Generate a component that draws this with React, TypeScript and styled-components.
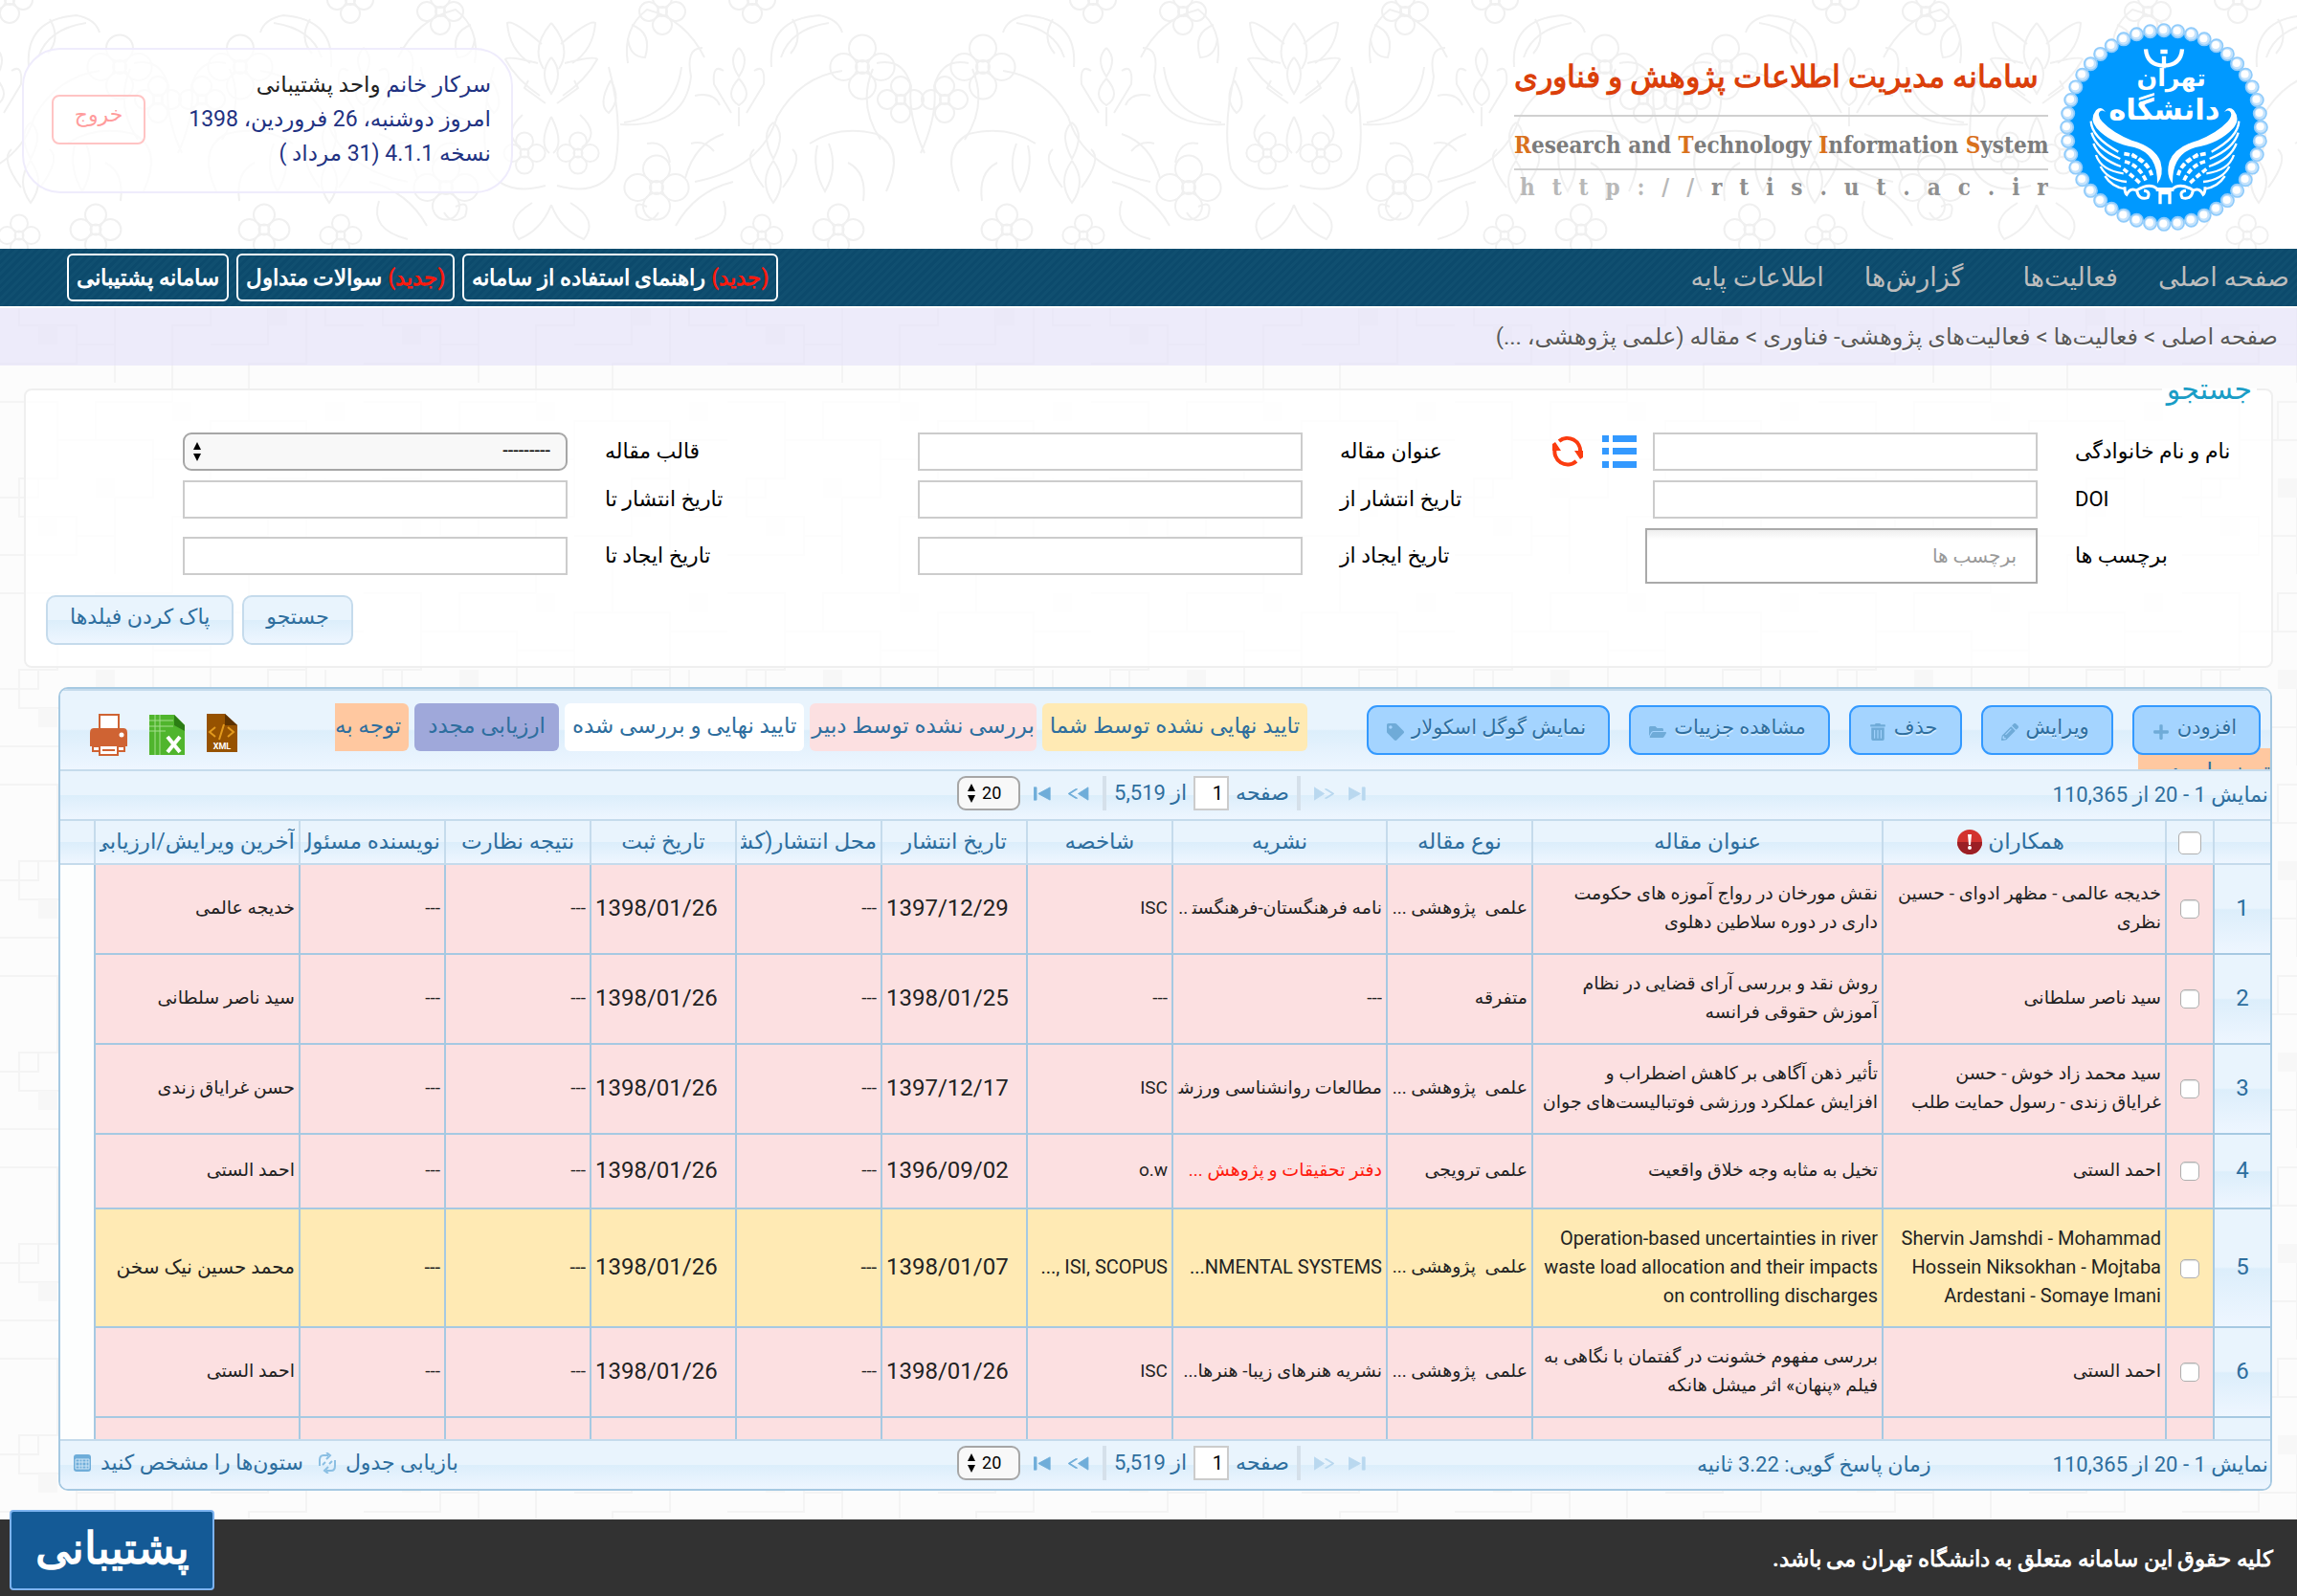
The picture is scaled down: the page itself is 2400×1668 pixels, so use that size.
import React from "react";
import styled, { createGlobalStyle } from "styled-components";
import { FaPlus, FaPencilAlt, FaTrashAlt, FaFolderOpen, FaTag } from "react-icons/fa";

const svgUrl = (markup: string) => `url("data:image/svg+xml,${encodeURIComponent(markup)}")`;

const flower = (x: number, y: number, r: number) =>
  `<g transform="translate(${x} ${y})"><circle r="${r * 0.5}"/><circle cy="${-r * 1.4}" r="${r}"/><circle cy="${r * 1.4}" r="${r}"/><circle cx="${-r * 1.4}" r="${r}"/><circle cx="${r * 1.4}" r="${r}"/></g>`;

const halfMotif = `
  <path d="M0 60Q14 76 0 98Q-14 76 0 60M0 24Q22 50 8 72M10 46Q40 20 46 24Q44 52 22 66M14 66Q46 58 48 62Q36 84 12 100M24 84L28 92L6 108"/>
  <path d="M0 122Q14 150 2 160M30 120Q52 140 32 154M60 70Q76 130 66 176Q50 206 6 194"/>
  <path d="M62 84Q48 110 60 118Q74 104 62 84M72 130Q140 134 146 80Q140 50 158 50M76 128Q130 120 136 70"/>
  <path d="M80 66Q74 30 100 10Q140 20 160 60M84 26Q106 34 98 60Q82 60 80 40"/>
  <path d="M196 50Q184 62 196 80Q208 62 196 50M196 82Q180 100 196 110Q212 100 196 82M180 74Q168 66 170 88L188 118M212 74Q224 66 222 88L204 118M196 112V132"/>
  <path d="M180 140Q150 150 140 186M146 150Q160 146 170 158M100 150Q120 146 124 170M252 20Q264 40 250 56M310 170Q330 180 326 210M150 100Q170 96 176 110"/>
  <path d="M230 70Q226 20 280 16Q300 20 304 34M240 60Q250 30 290 24M304 74Q260 80 236 122Q220 176 150 190"/>
  <path d="M232 128Q218 140 232 166Q246 140 232 128M232 168Q216 190 232 212Q248 190 232 168M212 156Q200 166 222 196M252 156Q264 166 242 196"/>
  <path d="M180 210Q190 240 150 250M190 190Q150 200 130 236M270 150Q300 130 340 140Q370 156 350 200M278 152Q272 176 286 200Q300 176 290 150"/>
  <path d="M20 212Q50 230 34 250Q10 240 0 214M100 216Q84 208 90 226Q104 236 112 222M340 66Q368 60 376 90Q372 120 390 160M336 72Q320 110 344 146"/>
  ${flower(28, 160, 9)}${flower(110, 196, 14)}${flower(325, 70, 14)}${flower(300, 240, 11)}${flower(116, 12, 10)}${flower(365, 104, 10)}${flower(210, 0, 10)}${flower(220, 246, 9)}`;

const floral = svgUrl(
  `<svg xmlns="http://www.w3.org/2000/svg" width="776" height="260" viewBox="0 0 776 260"><g fill="none" stroke="#f0f0f0" stroke-width="2"><g>${halfMotif}</g><g transform="translate(776 0) scale(-1 1)">${halfMotif}</g></g></svg>`
);

const bricks = svgUrl(
  `<svg xmlns="http://www.w3.org/2000/svg" width="380" height="200" viewBox="0 0 380 200"><g fill="none" stroke="#f4f4f4" stroke-width="2"><path d="M0 20H60V60H100V20H180V0M60 60V100H20V140H80V180H0M100 60H160V120H120V160H80M160 80H220V40H260V0M220 80V140H180V200M260 40H320V100H280V160H220M320 60H380M320 100V180H260V200M340 100V140H380M120 160V200M40 100V120H0"/></g><g fill="#f7f7f7"><rect x="180" y="20" width="20" height="20"/><rect x="40" y="140" width="20" height="20"/><rect x="280" y="120" width="20" height="20"/><rect x="340" y="20" width="20" height="20"/><rect x="100" y="100" width="20" height="20"/></g></svg>`
);

const arrows = svgUrl(
  `<svg xmlns="http://www.w3.org/2000/svg" width="10" height="20" viewBox="0 0 10 20"><path d="M5 0L9 8H1ZM5 20L9 12H1Z" fill="#000"/></svg>`
);

const sheen = "linear-gradient(#e9f4fd 0, #e9f4fd 49%, #dceefb 51%, #eef6ff 100%)";
const textFont = 'Roboto, "DejaVu Sans", sans-serif';
const boldFont = 'Roboto, "Open Sans", serif';
const slabFont = '"DejaVu Serif Condensed", "DejaVu Serif", serif';

const Global = createGlobalStyle`
  * { box-sizing: border-box; }
  body { margin: 0; direction: rtl; font: 20px/30px ${textFont}; color: #222; background: #fcfcfc ${bricks}; }
  button, input, select { font: inherit; color: inherit; margin: 0; }
  a { color: inherit; text-decoration: none; }
`;

/* ---------- header ---------- */
const Header = styled.header`
  height: 260px;
  padding: 24px 30px 0 23px;
  display: flex;
  align-items: flex-start;
  background: #fff ${floral} -200px 0;
`;
const Brand = styled.div`
  width: 558px;
  margin: 16px 12px 0 auto;
  display: flex;
  flex-direction: column;
`;
const BrandTitle = styled.h1`
  margin: 0;
  padding-right: 10px;
  height: 80px;
  font: 700 32px/80px ${boldFont};
  color: #db3f0a;
  white-space: nowrap;
`;
const Rule = styled.div`
  height: 2px;
  background: #d0d0d0;
`;
const BrandLatin = styled.div`
  direction: ltr;
  height: 54px;
  font: 700 24px/60px ${slabFont};
  color: #7c7c7c;
  white-space: nowrap;
  b { color: #d9711c; }
`;
const BrandUrl = styled.div`
  direction: ltr;
  display: flex;
  justify-content: space-between;
  padding-left: 6px;
  font: 700 24px/36px ${slabFont};
  color: #8f8f8f;
  span:nth-child(-n + 7) { color: #b8b8b8; }
`;
const UserCard = styled.section`
  width: 513px;
  height: 152px;
  margin-top: 26px;
  padding: 0 21px 2px 29px;
  display: flex;
  align-items: center;
  justify-content: space-between;
  border: 2px solid #efecfc;
  border-radius: 40px;
  background: rgba(255, 255, 255, 0.7);
`;
const UserLines = styled.div`
  font-size: 23px;
  line-height: 36px;
  color: #1f3282;
  b { font-weight: 400; color: #222; }
`;
const Logout = styled.button`
  width: 98px;
  height: 52px;
  padding: 0 0 10px;
  font-size: 22px;
  color: #ff9c9c;
  background: transparent;
  border: 2px solid #ffc4c4;
  border-radius: 8px;
`;

/* ---------- navigation ---------- */
const Nav = styled.nav`
  height: 60px;
  padding: 0 8px 0 70px;
  display: flex;
  align-items: center;
  background: repeating-linear-gradient(-45deg, #0c4a6c 0 3px, #11517a00 3px 6px), #104f70;
`;
const NavLink = styled.a<{ $gap: number }>`
  font-size: 27px;
  color: #bdbdbd;
  margin-left: ${(p) => p.$gap}px;
`;
const NavButtons = styled.div`
  margin-right: auto;
  display: flex;
  gap: 8px;
`;
const NavButton = styled.a`
  height: 50px;
  padding: 0 8px;
  font: 700 23px/48px ${boldFont};
  color: #fff;
  border: 2px solid #fff;
  border-radius: 6px;
  white-space: nowrap;
  em { font-style: normal; color: #ff1a0d; }
`;
const Crumbs = styled.div`
  height: 62px;
  padding: 0 20px;
  border-top: 2px solid #fff;
  font-size: 24px;
  line-height: 60px;
  color: #5a5a5a;
  text-shadow: 0 2px 1px #fff;
  background: rgba(226, 224, 248, 0.6);
`;

/* ---------- search form ---------- */
const Search = styled.fieldset`
  margin: 9px 25px 0;
  padding: 0;
  border: 2px solid #efefef;
  border-radius: 8px;
  background: rgba(255, 255, 255, 0.8);
`;
const Legend = styled.legend`
  margin-right: 15px;
  padding: 0 5px;
  font-size: 30px;
  line-height: 32px;
  color: #1a9dc6;
`;
const Fields = styled.div`
  display: grid;
  grid-template-columns: repeat(3, 1fr);
  row-gap: 10px;
  padding: 29px 38px 12px 4px;
`;
const Field = styled.div`
  display: grid;
  grid-template-columns: 206px minmax(0, 1fr) 160px;
  align-items: center;
  color: #000;
`;
const FieldLabel = styled.label`
  padding-left: 39px;
  font-size: 22px;
  direction: ltr;
`;
const TextBox = styled.input`
  width: 100%;
  height: 40px;
  padding: 0 8px;
  border: 2px solid #ccc;
  background: #fff;
`;
const TagBox = styled.input`
  width: calc(100% + 8px);
  height: 58px;
  padding: 0 20px;
  margin-left: -7px;
  font-size: 20px;
  border: 2px solid #aaa;
  background: linear-gradient(#eee, #fff 10px);
  &::placeholder { color: #999; opacity: 1; }
`;
const Select = styled.select`
  appearance: none;
  width: 100%;
  height: 40px;
  padding: 0 16px 4px 30px;
  font-size: 20px;
  color: #000;
  border: 2px solid #a6a6a6;
  border-radius: 9px;
  background: #f8f8f8 ${arrows} 8px center no-repeat;
`;
const Tools = styled.div`
  display: flex;
  gap: 20px;
  padding-right: 17px;
`;
const IconButton = styled.button`
  padding: 0;
  border: 0;
  background: none;
  display: flex;
`;
const Actions = styled.div`
  display: flex;
  justify-content: flex-end;
  gap: 9px;
  padding: 0 0 22px 21px;
`;
const SoftButton = styled.button`
  height: 52px;
  padding: 0 23px 6px;
  font-size: 22px;
  color: #2e6e9e;
  border: 2px solid #c5dbec;
  border-radius: 10px;
  background: ${sheen};
`;

/* ---------- grid ---------- */
const Panel = styled.section`
  margin: 20px 26px 30px 61px;
  border: 2px solid #a6c9e2;
  border-radius: 10px;
  overflow: hidden;
  color: #2e6e9e;
`;
const Toolbar = styled.div`
  position: relative;
  height: 84px;
  overflow: hidden;
  padding: 0 10px 0 31px;
  display: flex;
  align-items: center;
  border-top: 2px solid #c5dbec;
  background: ${sheen};
`;
const ToolButtons = styled.div`
  position: relative;
  z-index: 1;
  display: flex;
  gap: 20px;
`;
const ToolButton = styled.button`
  height: 52px;
  padding: 0 23px 6px 19px;
  display: flex;
  align-items: center;
  gap: 8px;
  font-size: 21px;
  line-height: 40px;
  text-shadow: 0 2px 0 #cfe8fc;
  border: 2px solid #3399ff;
  border-radius: 11px;
  background: #a4d4ff;
  white-space: nowrap;
  svg { width: 18px; height: 18px; color: #6fabd8; margin-top: 10px; }
`;
const Chips = styled.div`
  margin: 0 62px 6px auto;
  display: flex;
  gap: 6px;
`;
const Chip = styled.span<{ $bg: string; $pad?: number }>`
  height: 50px;
  padding: 0 ${(p) => p.$pad ?? 8}px;
  font-size: 23px;
  line-height: 48px;
  border-radius: 6px;
  background: ${(p) => p.$bg};
  white-space: nowrap;
`;
const ChipStart = styled(Chip)`
  padding-left: 0;
  border-radius: 0 6px 6px 0;
`;
const ChipRest = styled(Chip)`
  position: absolute;
  right: 0;
  bottom: -28px;
  padding-right: 0;
  border-radius: 6px 0 0 6px;
`;
const Exports = styled.div`
  display: flex;
  gap: 22px;
  margin-top: 10px;
`;
const Pager = styled.div`
  height: 52px;
  padding: 0 2px 0 14px;
  display: grid;
  grid-template-columns: 1fr auto 1fr;
  align-items: center;
  font-size: 22px;
  border-top: 2px solid #c5dbec;
  background: ${sheen};
`;
const PagerInfo = styled.div`
  display: flex;
  gap: 127px;
  white-space: nowrap;
`;
const PagerLinks = styled.div`
  display: flex;
  justify-content: flex-end;
  gap: 16px;
  padding-bottom: 4px;
`;
const PagerLink = styled.button`
  padding: 0;
  border: 0;
  background: none;
  display: flex;
  align-items: center;
  gap: 10px;
  font-size: 22px;
  color: #2e6e9e;
`;
const PagerNav = styled.div`
  direction: ltr;
  display: flex;
  align-items: center;
  gap: 14px;
  margin-right: 16px;
  padding-bottom: 4px;
`;
const Divider = styled.i`
  width: 4px;
  height: 36px;
  background: #d5e0ea;
`;
const PageInput = styled.input`
  width: 37px;
  height: 36px;
  padding: 0 4px;
  font-size: 20px;
  text-align: right;
  color: #000;
  border: 2px solid #ccc;
  background: #fff;
`;
const PageText = styled.label`
  display: flex;
  align-items: center;
  gap: 7px;
  margin: 0 -6px;
  direction: rtl;
`;
const PageSize = styled(Select)`
  width: 66px;
  height: 36px;
  padding: 0 16px 0 24px;
  font-size: 18px;
`;
const Viewport = styled.div`
  height: 648px;
  overflow: hidden;
  border-top: 2px solid #c5dbec;
`;
const Table = styled.table`
  width: 100%;
  table-layout: fixed;
  border-collapse: separate;
  border-spacing: 0;
`;
const Col = styled.col<{ $w?: number }>`
  width: ${(p) => (p.$w ? p.$w + "px" : "auto")};
`;
const HeadCell = styled.th`
  height: 46px;
  padding: 0 4px;
  font-size: 23px;
  font-weight: 400;
  line-height: 42px;
  white-space: nowrap;
  border-left: 2px solid #c5dbec;
  border-bottom: 2px solid #c5dbec;
  background: ${sheen};
  &:last-child { border-left: 0; }
`;
const Clip = styled.div`
  overflow: hidden;
  white-space: pre;
`;
const WithIcon = styled.span`
  display: inline-flex;
  align-items: center;
  gap: 6px;
  padding-right: 28px;
`;
const Row = styled.tr<{ $bg: string; $h: number; $size: number }>`
  height: ${(p) => p.$h}px;
  font-size: ${(p) => p.$size}px;
  background: ${(p) => p.$bg};
`;
const Cell = styled.td<{ $kind?: "num" | "check" | "date" | "rest" | "type"; $red?: boolean }>`
  padding: 0 ${(p) => (p.$kind === "check" ? 0 : 4)}px 2px;
  vertical-align: middle;
  white-space: pre-line;
  color: ${(p) => (p.$red ? "#ff1a0d" : p.$kind === "num" ? "#2e6e9e" : "#222")};
  border-left: 2px solid #a6c9e2;
  border-bottom: 2px solid #a6c9e2;
  ${(p) => p.$kind === "num" && `text-align: center; font-size: 24px; background: ${sheen};`}
  ${(p) => p.$kind === "check" && "text-align: center;"}
  ${(p) => p.$kind === "date" && "padding-left: 6px; text-align: left; direction: ltr; font-size: 24px;"}
  ${(p) => p.$kind === "type" && "font-size: 19px;"}
  ${(p) => p.$kind === "rest" && "border: 0; background: #fdfefe;"}
`;
const Check = styled.input<{ $size: number }>`
  appearance: none;
  display: inline-block;
  vertical-align: middle;
  width: ${(p) => p.$size}px;
  height: ${(p) => p.$size}px;
  border: 1px solid #b0b0b0;
  border-radius: 5px;
  background: #fff;
  box-shadow: inset 0 1px 1px #ddd;
`;

/* ---------- footer ---------- */
const Footer = styled.footer`
  height: 80px;
  padding: 0 25px;
  font: 700 23px/84px ${boldFont};
  color: #fff;
  background: #323232;
`;
const Support = styled.a`
  position: fixed;
  left: 10px;
  bottom: 6px;
  width: 214px;
  height: 84px;
  font: 700 46px/76px ${boldFont};
  text-align: center;
  color: #fff;
  border: 2px solid #7db3f0;
  border-radius: 4px;
  background: #145a96;
`;

const beads = Array.from({ length: 44 }, (_, i) => {
  const a = (i / 44) * Math.PI * 2;
  return { x: 363 + 304 * Math.sin(a), y: 369 - 304 * Math.cos(a) };
});

const Wing = () => (
  <g>
    <path fill="#fff" d="M180 322Q166 300 150 316Q128 344 152 372Q196 420 270 432Q344 452 342 546Q364 520 352 476Q334 430 262 410Q204 388 170 352Q150 328 164 318Q172 314 180 322Z" />
    <g fill="none" stroke="#fff" strokeWidth="7">
      <path d="M134 350Q136 400 220 446M136 386Q150 436 226 468M142 420Q160 468 228 492M150 456Q166 504 236 514M164 492Q186 534 246 540M178 522Q200 556 240 562" />
    </g>
    <g fill="none" stroke="#fff" strokeWidth="11" strokeDasharray="17 8">
      <path d="M238 452Q310 462 326 524M240 476Q286 488 308 540M236 500Q262 520 288 544M262 454Q304 480 316 500" />
    </g>
    <path fill="none" stroke="#fff" strokeWidth="9" d="M240 556Q240 576 246 580Q258 556 278 568Q284 598 312 590Q322 570 300 568M278 566Q320 540 344 564" />
  </g>
);

const Seal = () => (
  <svg width="218" height="218" viewBox="36 42 654 654" role="img" aria-label="دانشگاه تهران">
    <circle cx="363" cy="369" r="298" fill="#0099ff" />
    {beads.map((b, i) => (
      <g key={i}>
        <circle cx={b.x} cy={b.y} r="20" fill="#c5e3fc" stroke="#8fcbfb" strokeWidth="5" />
        <circle cx={b.x - 2} cy={b.y - 2} r="12" fill="#fff" />
      </g>
    ))}
    <g fill="#fff" fontFamily="DejaVu Sans" fontWeight="700" textAnchor="middle">
      <text x="386" y="240" fontSize="76">تهران</text>
      <text x="364" y="346" fontSize="92">دانشگاه</text>
    </g>
    <path d="M306 124Q310 174 363 176Q416 174 420 124M363 146V184M352 132H374" fill="none" stroke="#fff" strokeWidth="13" />
    <Wing />
    <g transform="translate(732 0) scale(-1 1)"><Wing /></g>
    <path d="M338 558H394V570H386V610H376V580H356V610H346V570H338Z" fill="#fff" />
  </svg>
);

const ListIcon = () => (
  <svg width="36" height="36" viewBox="0 0 36 36" fill="#3399ff">
    <path d="M0 1H7V8H0ZM11 1H36V8H11ZM0 14H7V21H0ZM11 14H36V21H11ZM0 28H7V35H0ZM11 28H36V35H11Z" />
  </svg>
);
const RefreshIcon = () => (
  <svg width="32" height="34" viewBox="0 0 32 34">
    <path d="M7 7A13.500 13.500 0 0 1 29 19M25 28A13.500 13.500 0 0 1 3 14" fill="none" stroke="#fb3c10" strokeWidth="4" />
    <path d="M23 17H32V24L29 26ZM9 17H0V10L3 8Z" fill="#fb3c10" />
  </svg>
);
const XmlIcon = () => (
  <svg width="33" height="40" viewBox="0 0 33 40">
    <path d="M1 0H20L33 12V40H1Z" fill="#965200" />
    <path d="M20 0L33 12H20Z" fill="#5e3300" />
    <path d="M10 14L4 19L10 24M23 14L29 19L23 24M19 11L14 27" fill="none" stroke="#e39a1c" strokeWidth="2" />
    <text x="17" y="37" fontSize="9" fontWeight="700" fontFamily="Roboto" fill="#fff" textAnchor="middle">XML</text>
  </svg>
);
const ExcelIcon = () => (
  <svg width="38" height="44" viewBox="0 0 38 44">
    <path d="M1 1H27L38 12V43H1Z" fill="#50b52d" />
    <path d="M27 1L38 12V18L27 12Z" fill="#2c7d14" />
    <path d="M1 7H26M1 13H26M1 18H18M7 1V43M12 1V43" stroke="#a4df8d" strokeWidth="1" />
    <path d="M20 24L33 40M33 24L20 40" stroke="#fff" strokeWidth="4" />
  </svg>
);
const PrintIcon = () => (
  <svg width="39" height="44" viewBox="0 0 39 44">
    <path d="M10 16V1H30V16" fill="#fff" stroke="#cf6333" strokeWidth="2" />
    <path d="M4 15H35Q39 15 39 20V34H0V20Q0 15 4 15Z" fill="#cf6333" />
    <circle cx="33" cy="22" r="2.500" fill="#fff" />
    <path d="M3 34H36V39H3Z" fill="#fff" stroke="#cf6333" strokeWidth="2" />
    <path d="M10 33H29V43H10ZM13 38H26" fill="#fff" stroke="#cf6333" strokeWidth="2" />
  </svg>
);
const AlertIcon = () => (
  <svg width="26" height="26" viewBox="0 0 26 26">
    <circle cx="13" cy="13" r="13" fill="#d2332f" />
    <path d="M0 13A13 13 0 0 0 26 13Z" fill="#9b1f25" />
    <path d="M11 5H15L14 16H12Z" fill="#fff" />
    <circle cx="13" cy="19" r="2" fill="#fff" />
  </svg>
);
const arrowPaths = {
  first: "M0 2H3V16H0ZM18 2V16L5 9Z",
  prev: "M22 2V16L11 9ZM10 4L2 9L10 14L8 14L0 9L8 4Z",
  next: "M0 2V16L11 9ZM12 4L20 9L12 14L14 14L22 9L14 4Z",
  last: "M15 2H18V16H15ZM0 2V16L13 9Z",
};
const StepIcon = ({ name, faded }: { name: keyof typeof arrowPaths; faded?: boolean }) => (
  <svg width="22" height="17" viewBox="0 0 23 18" fill={faded ? "#b9d8ef" : "#6fadd9"} stroke={faded ? "#b9d8ef" : "#6fadd9"}>
    <path d={arrowPaths[name]} />
  </svg>
);
const ReloadIcon = () => (
  <svg width="18" height="22" viewBox="0 0 18 22" fill="none" stroke="#8bbfe3" strokeWidth="2">
    <path d="M10 3H5Q1 3 1 8V14M8 19H13Q17 19 17 14V8M8 0L12 3L8 7M10 15L6 19L10 22M4 13L7 10M11 12L14 9" />
  </svg>
);
const ColumnsIcon = () => (
  <svg width="18" height="18" viewBox="0 0 18 18">
    <rect width="18" height="18" rx="3" fill="#6fadd9" />
    <path d="M2 5H16V15H2ZM2 8H16M2 12H16M6 5V15M9 5V15M13 5V15" fill="none" stroke="#cfe6f7" />
  </svg>
);

const fields: { id: string; label: string; kind?: "select" | "tags" | "picker" }[] = [
  { id: "name", label: "نام و نام خانوادگی", kind: "picker" },
  { id: "title", label: "عنوان مقاله" },
  { id: "format", label: "قالب مقاله", kind: "select" },
  { id: "doi", label: "DOI" },
  { id: "pubFrom", label: "تاریخ انتشار از" },
  { id: "pubTo", label: "تاریخ انتشار تا" },
  { id: "tags", label: "برچسب ها", kind: "tags" },
  { id: "madeFrom", label: "تاریخ ایجاد از" },
  { id: "madeTo", label: "تاریخ ایجاد تا" },
];

const tools = [
  { label: "افزودن", Icon: FaPlus },
  { label: "ویرایش", Icon: FaPencilAlt },
  { label: "حذف", Icon: FaTrashAlt },
  { label: "مشاهده جزییات", Icon: FaFolderOpen },
  { label: "نمایش گوگل اسکولار", Icon: FaTag },
];

const heads = ["عنوان مقاله", "نوع مقاله", "نشریه", "شاخصه", "تاریخ انتشار", "محل انتشار(کشور)", "تاریخ ثبت", "نتیجه نظارت", "نویسنده مسئول", "آخرین ویرایش/ارزیابی"];
const widths = [60, 50, 296, 366, 152, 224, 152, 152, 152, 152, 152, 152, 214, undefined];

type Article = { h: number; own?: boolean; people: string; title: string; type: string; journal: string; redJournal?: boolean; index: string; pub: string; editor: string };
const pink = "#fce0e1";
const yellow = "#ffeab4";
const articles: Article[] = [
  { h: 94, people: "خدیجه عالمی - مظهر ادوای - حسین نظری", title: "نقش مورخان در رواج آموزه های حکومت داری در دوره سلاطین دهلوی", type: "علمی  پژوهشی ...", journal: "نامه فرهنگستان-فرهنگست\u200d ..", index: "ISC", pub: "1397/12/29", editor: "خدیجه عالمی" },
  { h: 94, people: "سید ناصر سلطانی", title: "روش نقد و بررسی آرای قضایی در نظام آموزش حقوقی فرانسه", type: "متفرقه", journal: "---", index: "---", pub: "1398/01/25", editor: "سید ناصر سلطانی" },
  { h: 94, people: "سید محمد زاد خوش - حسن\nغرایاق زندی - رسول حمایت طلب", title: "تأثیر ذهن آگاهی بر کاهش اضطراب و\nافزایش عملکرد ورزشی فوتبالیست‌های جوان", type: "علمی  پژوهشی ...", journal: "مطالعات روانشناسی ورزش\u200d..", index: "ISC", pub: "1397/12/17", editor: "حسن غرایاق زندی" },
  { h: 78, people: "احمد الستی", title: "تخیل به مثابه وجه خلاق واقعیت", type: "علمی ترویجی", journal: "دفتر تحقیقات و پژوهش ...", redJournal: true, index: "o.w", pub: "1396/09/02", editor: "احمد الستی" },
  { h: 124, own: true, people: "Shervin Jamshdi - Mohammad Hossein Niksokhan - Mojtaba Ardestani - Somaye Imani", title: "Operation-based uncertainties in river waste load allocation and their impacts on controlling discharges", type: "علمی  پژوهشی ...", journal: "NMENTAL SYSTEMS...", index: "ISI, SCOPUS ,...", pub: "1398/01/07", editor: "محمد حسین نیک سخن" },
  { h: 94, people: "احمد الستی", title: "بررسی مفهوم خشونت در گفتمان با نگاهی به فیلم «پنهان» اثر میشل هانکه", type: "علمی  پژوهشی ...", journal: "نشریه هنرهای زیبا- هنرها...", index: "ISC", pub: "1398/01/26", editor: "احمد الستی" },
  { h: 94, people: "", title: "", type: "", journal: "", index: "", pub: "", editor: "" },
];

const PageNav = ({ place }: { place: string }) => (
  <PagerNav>
    <PageSize aria-label={`ردیف در صفحه ${place}`}><option>20</option></PageSize>
    <IconButton aria-label="اول"><StepIcon name="first" /></IconButton>
    <IconButton aria-label="قبل"><StepIcon name="prev" /></IconButton>
    <Divider />
    <PageText>
      صفحه <PageInput defaultValue="1" /> از 5,519
    </PageText>
    <Divider />
    <IconButton aria-label="بعد"><StepIcon name="next" faded /></IconButton>
    <IconButton aria-label="آخر"><StepIcon name="last" faded /></IconButton>
  </PagerNav>
);

export default function App() {
  return (
    <>
      <Global />
      <Header>
        <Seal />
        <Brand>
          <BrandTitle>سامانه مدیریت اطلاعات پژوهش و فناوری</BrandTitle>
          <Rule />
          <BrandLatin><b>R</b>esearch and <b>T</b>echnology <b>I</b>nformation <b>S</b>ystem</BrandLatin>
          <Rule />
          <BrandUrl>{"http://rtis.ut.ac.ir".split("").map((c, i) => <span key={i}>{c}</span>)}</BrandUrl>
        </Brand>
        <UserCard>
          <UserLines>
            <div>سرکار خانم <b>واحد پشتیبانی</b></div>
            <div>امروز دوشنبه، 26 فروردین، 1398</div>
            <div>نسخه 4.1.1 (31 مرداد )</div>
          </UserLines>
          <Logout>خروج</Logout>
        </UserCard>
      </Header>
      <Nav>
        <NavLink href="#" $gap={42}>صفحه اصلی</NavLink>
        <NavLink href="#" $gap={62}>فعالیت‌ها</NavLink>
        <NavLink href="#" $gap={42}>گزارش‌ها</NavLink>
        <NavLink href="#" $gap={0}>اطلاعات پایه</NavLink>
        <NavButtons>
          <NavButton href="#"><em>(جدید)</em> راهنمای استفاده از سامانه</NavButton>
          <NavButton href="#"><em>(جدید)</em> سوالات متداول</NavButton>
          <NavButton href="#">سامانه پشتیبانی</NavButton>
        </NavButtons>
      </Nav>
      <Crumbs>صفحه اصلی &gt; فعالیت‌ها &gt; فعالیت‌های پژوهشی- فناوری &gt; مقاله (علمی پژوهشی، ...)</Crumbs>

      <main>
        <Search>
          <Legend>جستجو</Legend>
          <Fields>
            {fields.map((f) => (
              <Field key={f.id}>
                <FieldLabel htmlFor={f.id}>{f.label}</FieldLabel>
                {f.kind === "select" ? (
                  <Select id={f.id}><option>---------</option></Select>
                ) : f.kind === "tags" ? (
                  <TagBox id={f.id} placeholder="برچسب ها" />
                ) : (
                  <TextBox id={f.id} />
                )}
                {f.kind === "picker" && (
                  <Tools>
                    <IconButton type="button" aria-label="فهرست"><ListIcon /></IconButton>
                    <IconButton type="button" aria-label="بازنشانی"><RefreshIcon /></IconButton>
                  </Tools>
                )}
              </Field>
            ))}
          </Fields>
          <Actions>
            <SoftButton type="button">جستجو</SoftButton>
            <SoftButton type="button">پاک کردن فیلدها</SoftButton>
          </Actions>
        </Search>

        <Panel>
          <Toolbar>
            <ToolButtons>
              {tools.map(({ label, Icon }) => (
                <ToolButton key={label}>{label}<Icon /></ToolButton>
              ))}
            </ToolButtons>
            <Chips>
              <Chip $bg="#ffeab4">تایید نهایی نشده توسط شما</Chip>
              <Chip $bg="#fce0e1" $pad={2}>بررسی نشده توسط دبیر</Chip>
              <Chip $bg="#ffffff">تایید نهایی و بررسی شده</Chip>
              <Chip $bg="#9fa8da" $pad={14}>ارزیابی مجدد</Chip>
              <ChipStart $bg="#ffc8a0">توجه به</ChipStart>
            </Chips>
            <ChipRest $bg="#ffc8a0">توضیحات دبیر</ChipRest>
            <Exports>
              <IconButton aria-label="XML"><XmlIcon /></IconButton>
              <IconButton aria-label="Excel"><ExcelIcon /></IconButton>
              <IconButton aria-label="چاپ"><PrintIcon /></IconButton>
            </Exports>
          </Toolbar>
          <Pager>
            <PagerInfo>نمایش 1 - 20 از 110,365</PagerInfo>
            <PageNav place="بالا" />
          </Pager>
          <Viewport>
            <Table>
              <colgroup>{widths.map((w, i) => <Col key={i} $w={w} />)}</colgroup>
              <thead>
                <tr>
                  <HeadCell />
                  <HeadCell><Check type="checkbox" $size={24} aria-label="انتخاب همه" /></HeadCell>
                  <HeadCell><WithIcon>همکاران<AlertIcon /></WithIcon></HeadCell>
                  {heads.map((h) => <HeadCell key={h}><Clip>{h}</Clip></HeadCell>)}
                  <HeadCell />
                </tr>
              </thead>
              <tbody>
                {articles.map((a, i) => (
                  <Row key={i} $h={a.h} $bg={a.own ? yellow : pink} $size={a.own ? 20 : 19}>
                    <Cell $kind="num">{a.pub && i + 1}</Cell>
                    <Cell $kind="check">{a.pub && <Check type="checkbox" $size={20} aria-label={`انتخاب ${i + 1}`} />}</Cell>
                    <Cell>{a.people}</Cell>
                    <Cell>{a.title}</Cell>
                    <Cell $kind="type"><Clip>{a.type}</Clip></Cell>
                    <Cell $red={a.redJournal}><Clip>{a.journal}</Clip></Cell>
                    <Cell><Clip>{a.index}</Clip></Cell>
                    <Cell $kind="date">{a.pub}</Cell>
                    <Cell>{a.pub && "---"}</Cell>
                    <Cell $kind="date">{a.pub && "1398/01/26"}</Cell>
                    <Cell>{a.pub && "---"}</Cell>
                    <Cell>{a.pub && "---"}</Cell>
                    <Cell><Clip>{a.editor}</Clip></Cell>
                    <Cell $kind="rest" />
                  </Row>
                ))}
              </tbody>
            </Table>
          </Viewport>
          <Pager>
            <PagerInfo><span>نمایش 1 - 20 از 110,365</span><span>زمان پاسخ گویی: 3.22 ثانیه</span></PagerInfo>
            <PageNav place="پایین" />
            <PagerLinks>
              <PagerLink>بازیابی جدول<ReloadIcon /></PagerLink>
              <PagerLink>ستون‌ها را مشخص کنید<ColumnsIcon /></PagerLink>
            </PagerLinks>
          </Pager>
        </Panel>
      </main>
      <Footer>کلیه حقوق این سامانه متعلق به دانشگاه تهران می باشد.</Footer>
      <Support href="#">پشتیبانی</Support>
    </>
  );
}
